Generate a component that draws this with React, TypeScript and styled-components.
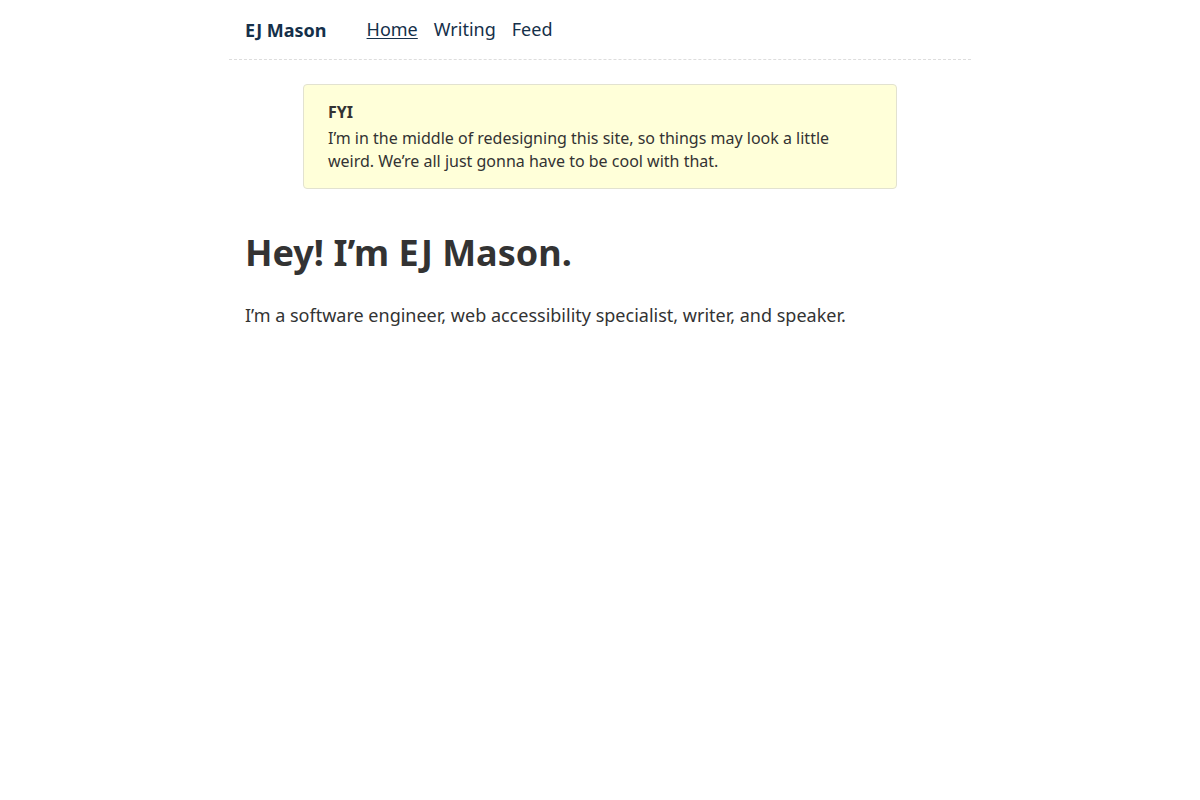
import * as React from 'react';
import styled, { createGlobalStyle } from 'styled-components';

const GlobalStyle = createGlobalStyle`
    body {
        margin: 0;
        background: #ffffff;
        font-family: 'Noto Sans', 'Open Sans', sans-serif;
        color: #333333;
    }
`;

const navLinks = [
    { label: 'Home', current: true },
    { label: 'Writing', current: false },
    { label: 'Feed', current: false },
];

const App: React.FC = () => (
    <>
        <GlobalStyle />
        <DivPage>
            <HeaderSite>
                <ASiteName href="#">EJ Mason</ASiteName>
                <NavMain>
                    {navLinks.map((link) => (
                        <ANavLink key={link.label} href="#" current={link.current}>
                            {link.label}
                        </ANavLink>
                    ))}
                </NavMain>
            </HeaderSite>
            <MainContent>
                <DivNotice>
                    <StrongNoticeTitle>FYI</StrongNoticeTitle>
                    <PNotice>
                        I’m in the middle of redesigning this site, so things may look a little
                        weird. We’re all just gonna have to be cool with that.
                    </PNotice>
                </DivNotice>
                <H1Intro>Hey! I’m EJ Mason.</H1Intro>
                <PIntro>I’m a software engineer, web accessibility specialist, writer, and speaker.</PIntro>
            </MainContent>
        </DivPage>
    </>
);

const NAVY = '#15304a';

const DivPage = styled.div`
    max-width: 742px;
    margin: 0 auto;
`;

const HeaderSite = styled.header`
    display: flex;
    align-items: center;
    gap: 40px;
    height: 60px;
    padding: 0 16px 1px;
    box-sizing: border-box;
    border-bottom: 1px dashed #dddddd;
`;

const ASiteName = styled.a`
    font-size: 18px;
    font-weight: 700;
    color: ${NAVY};
    text-decoration: none;
    padding-top: 2px;
`;

const NavMain = styled.nav`
    display: flex;
    gap: 16px;
`;

const ANavLink = styled.a<{ current: boolean }>`
    font-size: 18px;
    color: ${NAVY};
    text-decoration: ${({ current }) => (current ? 'underline' : 'none')};
    text-decoration-thickness: 1px;
    text-underline-offset: 2px;
`;

const MainContent = styled.main`
    padding: 24px 16px;
`;

const DivNotice = styled.div`
    width: 594px;
    box-sizing: border-box;
    margin: 0 auto;
    padding: 16px 24px 15px;
    background: #ffffd9;
    border: 1px solid #e2e2d0;
    border-radius: 4px;
    font-size: 16px;
    line-height: 23px;
    color: #333333;
`;

const StrongNoticeTitle = styled.strong`
    display: block;
    font-weight: 700;
    margin-bottom: 3px;
`;

const PNotice = styled.p`
    margin: 0;
`;

const H1Intro = styled.h1`
    margin: 40px 0 0;
    font-size: 36px;
    line-height: 48px;
    font-weight: 700;
    color: #333333;
`;

const PIntro = styled.p`
    margin: 24px 0 0;
    font-size: 18px;
    line-height: 28px;
    color: #333333;
`;

export default App;
